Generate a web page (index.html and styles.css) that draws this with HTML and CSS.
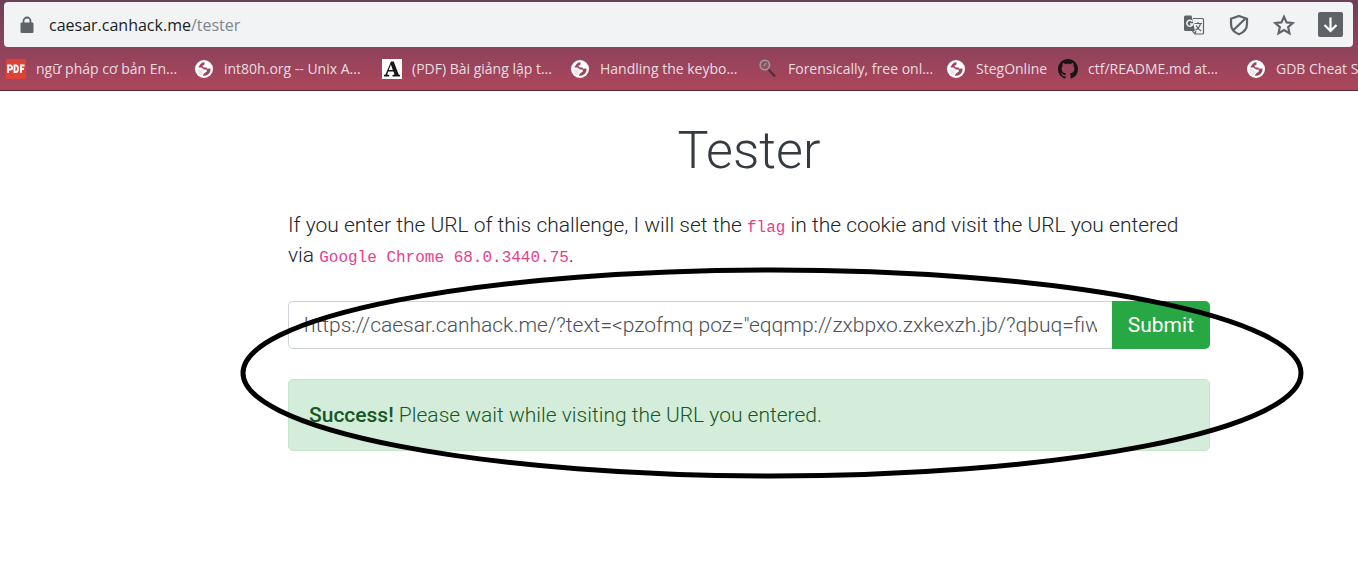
FILE: index.html
```html
<!DOCTYPE html>
<html lang="en">
<head>
<meta charset="utf-8">
<title>Tester</title>
<link rel="stylesheet" href="styles.css">
</head>
<body>
<svg class="sprite" width="0" height="0" aria-hidden="true">
  <symbol id="globe" viewBox="0 0 20 20">
    <circle cx="10" cy="10" r="9" fill="#fff"/>
    <path d="M10.500 3.200C8.500 3 7 4 6.200 5.500L4.200 8.500h3.300L10 10.500h2.700v2.300l-2.500 1.500-1.500 2.300c3 .8 5.800-.8 7-3.100.8-1.400.9-2.800.7-4l-3 .3-1.200-1.200H9.500L8.300 6.800 10.500 5.800Z" fill="#9b455c"/>
    <path d="M3.500 10.300h3.300l2 2h1.400v1.300l-2 1.300-.5 1.700-3-1.800Z" fill="#9b455c" opacity=".15"/>
  </symbol>
</svg>
<header class="browser">
  <div class="address">
    <svg class="lock" viewBox="0 0 14 18" aria-hidden="true"><path d="M3.500 8V5a3.500 3.500 0 0 1 7 0v3" fill="none" stroke="#5f6368" stroke-width="1.800"/><rect x=".5" y="6.500" width="13" height="10.500" rx="1.200" fill="#5f6368"/></svg>
    <a class="url" href="#"><span class="host">caesar.canhack.me</span>/tester</a>
    <div class="tools">
      <button class="tool" aria-label="Translate"><svg viewBox="0 0 22 22"><path d="M10 4.500h9.500q1 0 1 1v13.500q0 1-1 1H12l-2.500-3" fill="none" stroke="#5f6368" stroke-width="1.200"/><path d="M2.500 1.500h6L12 17H2.500q-1.500 0-1.500-1.500V3q0-1.500 1.500-1.500z" fill="#5f6368"/><path d="M9.300 7.600A3 3 0 1 0 9.700 10H7" fill="none" stroke="#f1f3f4" stroke-width="1.500"/><path d="M11.500 9.500h7.500M15 8v1.500M17.500 9.500q-1 4.500-5 6.500M13.200 11.500q1.500 3.500 5 5.500M12 20l1-3" fill="none" stroke="#5f6368" stroke-width="1.200"/></svg></button>
      <button class="tool" aria-label="Site protection"><svg viewBox="0 0 22 22"><path d="M11 2l8 2.700v5.300c0 5-3.500 8.500-8 10.200-4.500-1.700-8-5.200-8-10.200V4.700zM5.500 16L17 5" fill="none" stroke="#5f6368" stroke-width="2.200"/></svg></button>
      <button class="tool" aria-label="Bookmark this page"><svg viewBox="0 0 22 22"><path d="M11 2.700l2.600 5.700 6.200.6-4.700 4.100 1.400 6.200L11 16l-5.500 3.300 1.400-6.200L2.200 9l6.200-.6z" fill="none" stroke="#5f6368" stroke-width="2.100"/></svg></button>
      <button class="tool download" aria-label="Download"><svg viewBox="0 0 25 25"><path d="M12.500 5.500v13M6.500 13l6 6 6-6" fill="none" stroke="#fff" stroke-width="2.200"/></svg></button>
    </div>
  </div>
  <nav class="bookmarks">
    <a class="bookmark" href="#"><svg viewBox="0 0 20 20"><rect width="20" height="20" rx="1.500" fill="#db4437"/><path d="M2 14V6.500h2.200a1.800 1.800 0 0 1 0 4H2M8.500 6.500v6.600h1.300q2.200 0 2.200-3.300t-2.200-3.300zM15 14V6.500h3.500M15 10h3" fill="none" stroke="#fff" stroke-width="1.800"/></svg>ngữ pháp cơ bản En...</a>
    <a class="bookmark" href="#"><svg><use href="#globe"/></svg>int80h.org -- Unix A...</a>
    <a class="bookmark" href="#"><svg viewBox="0 0 20 20"><rect width="20" height="20" fill="#fff"/><path d="M9 2.500h2.700l5 13 1.300.5v1.500h-7.500V16l2-.5-1-3H6.200l-1 3 2 .5v1.500H2V16l1.500-.5zM6.800 11h4L8.900 5.500z" fill="#171717" fill-rule="evenodd"/></svg>(PDF) Bài giảng lập t...</a>
    <a class="bookmark" href="#"><svg><use href="#globe"/></svg>Handling the keybo...</a>
    <a class="bookmark" href="#"><svg viewBox="0 0 20 20"><path d="M10.500 10.500l6.500 7" stroke="#51323c" stroke-width="2.500"/><circle cx="6.800" cy="6" r="4.700" fill="#8b5361" stroke="#a29a9e" stroke-width="1.600"/><path d="M6 7l2-3" stroke="#c3abb1"/></svg>Forensically, free onl...</a>
    <a class="bookmark short" href="#"><svg><use href="#globe"/></svg>StegOnline</a>
    <a class="bookmark" href="#"><svg viewBox="0 0 16 16"><path fill="#171518" d="M8 0C3.580 0 0 3.580 0 8c0 3.540 2.290 6.530 5.470 7.590.4.070.55-.17.55-.38 0-.19-.01-.82-.01-1.490-2.010.37-2.530-.49-2.690-.94-.09-.23-.48-.94-.82-1.130-.28-.15-.68-.52-.01-.53.63-.01 1.080.58 1.230.82.72 1.210 1.870.87 2.330.66.07-.52.28-.87.51-1.070-1.780-.2-3.640-.89-3.640-3.950 0-.87.31-1.590.82-2.150-.08-.2-.36-1.020.08-2.120 0 0 .67-.21 2.200.82.64-.18 1.320-.27 2-.27s1.360.09 2 .27c1.530-1.040 2.200-.82 2.200-.82.44 1.100.16 1.920.08 2.120.51.56.82 1.270.82 2.150 0 3.070-1.870 3.750-3.650 3.950.29.25.54.73.54 1.480 0 1.070-.01 1.930-.01 2.200 0 .21.15.46.55.38A8.010 8.010 0 0 0 16 8c0-4.420-3.580-8-8-8z"/></svg>ctf/README.md at...</a>
    <a class="bookmark last" href="#"><svg><use href="#globe"/></svg>GDB Cheat S</a>
  </nav>
</header>
<main class="page">
  <div class="content">
    <h1 class="title">Tester</h1>
    <p class="intro">If you enter the URL of this challenge, I will set the <code>flag</code> in the cookie and visit the URL you entered via <code>Google Chrome 68.0.3440.75</code>.</p>
    <div class="result">
      <form class="url-form">
        <input class="url-input" type="text" aria-label="URL" value="https://caesar.canhack.me/?text=&lt;pzofmq poz=&quot;eqqmp://zxbpxo.zxkexzh.jb/?qbuq=fiwu">
        <button class="submit" type="button">Submit</button>
      </form>
      <div class="alert" role="status"><strong>Success!</strong> Please wait while visiting the URL you entered.</div>
      <svg class="ring" viewBox="0 0 1064 212" preserveAspectRatio="none" aria-hidden="true"><ellipse cx="532" cy="106" rx="529" ry="103" fill="none" stroke="#000" stroke-width="5"/></svg>
    </div>
  </div>
</main>
</body>
</html>
```
FILE: styles.css
```css
* { box-sizing: border-box; }
body { margin: 0; background: #fff; color: #212529; font: 300 21px/30px Roboto, "Noto Sans", sans-serif; }
a { color: inherit; text-decoration: none; }
button { border: 0; background: none; padding: 0; font: inherit; }
.sprite { position: absolute; }
.browser { background: linear-gradient(#6b4057, #8f435b 55%, #ad465b); border-bottom: 1px solid #5c2535; padding: 2px 5px 0 4px; }
.address { display: flex; align-items: center; height: 45px; padding: 0 10px 0 16px; border-radius: 4px; background: #f1f3f4; }
.lock { width: 14px; height: 18px; margin-right: 15px; }
.url { font: 400 16px/24px "Open Sans", sans-serif; color: #80868b; }
.host { color: #202124; }
.tools { display: flex; align-items: center; gap: 23px; margin-left: auto; }
.tool, .tool svg { display: block; width: 22px; height: 22px; }
.download, .download svg { width: 25px; height: 25px; }
.download { border-radius: 2px; background: #5f6368; }
.bookmarks { display: flex; height: 43px; margin-right: -5px; padding-left: 2px; color: #eadde1; font: 400 14px/20px "Open Sans", "Noto Sans", sans-serif; }
.bookmark { display: flex; align-items: center; flex: 0 0 188px; gap: 10px; white-space: nowrap; }
.bookmark svg { width: 20px; height: 20px; flex: none; }
.bookmark.short { flex-basis: 112px; }
.bookmark.last { flex: 1 1 0; min-width: 0; }
.page { padding: 30px 0 60px 140px; }
.content { max-width: 922px; margin: 0 auto; }
.title { margin: 0 0 29px; color: #343a40; font-size: 52px; font-weight: 300; line-height: 60px; text-align: center; }
.intro { margin: 0 0 31px; padding-right: 16px; }
.intro code { font: 400 16px/20px "Liberation Mono", monospace; color: #e83e8c; }
.result { position: relative; }
.url-form { display: flex; margin-bottom: 30px; }
.url-input { flex: 1; min-width: 0; height: 48px; padding: 0 15px; border: 1px solid #ced4da; border-right: 0; border-radius: 5px 0 0 5px; background: #fff; color: #495057; font: inherit; }
.submit { padding: 0 16px; border-radius: 0 5px 5px 0; background: #28a745; color: #fff; font-weight: 400; }
.alert { padding: 20px; border: 1px solid #c3e6cb; border-radius: 5px; background: #d4edda; color: #155724; }
.alert strong { font-weight: 500; }
.ring { position: absolute; left: -48px; top: -34px; width: 1064px; height: 212px; pointer-events: none; }
```
